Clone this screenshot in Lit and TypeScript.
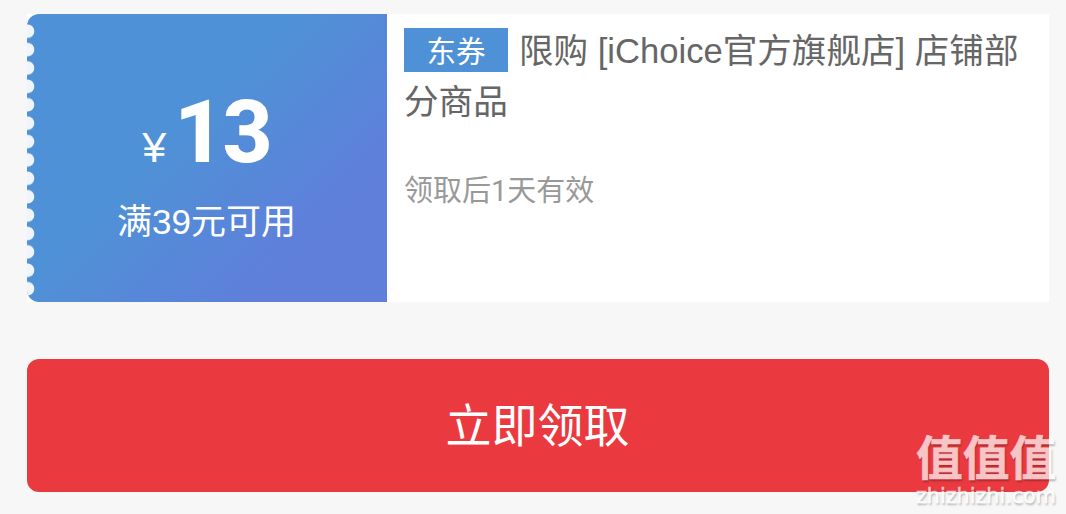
import { LitElement, html, css } from 'lit';
import { customElement, property } from 'lit/decorators.js';

const FONT = css`'Liberation Sans', 'Noto Sans CJK SC', sans-serif`;

@customElement('coupon-card')
export class CouponCard extends LitElement {
  static styles = css`
    :host {
      display: flex;
      height: 288px;
      background: #fff;
      font-family: ${FONT};
    }

    .value {
      position: relative;
      box-sizing: border-box;
      flex: 0 0 360px;
      padding-top: 74px;
      border-radius: 12px 0 0 12px;
      overflow: hidden;
      background: linear-gradient(135deg, #4f91d6 42%, #5f7fdb 78%);
      color: #fff;
      text-align: center;
    }

    /* Perforated left edge */
    .holes {
      position: absolute;
      left: 0;
      top: 7.5px;
      width: 8px;
      height: 276px;
      background: radial-gradient(circle at 0.5px 9.2px, #f0f5fd 6.3px, transparent 7.2px) 0 0 / 8px 18.4px repeat-y;
    }

    .amount {
      display: flex;
      justify-content: center;
      align-items: baseline;
      height: 88px;
      line-height: 88px;
      white-space: nowrap;
    }

    .symbol {
      font-size: 43px;
      margin-right: 8px;
    }

    .number {
      font-family: Roboto, ${FONT};
      font-size: 87px;
      font-weight: 800;
      letter-spacing: -2px;
      margin-right: 1px;
    }

    .limit {
      margin-top: 20px;
      font-size: 35px;
      line-height: 52px;
      padding-right: 1px;
    }

    .info {
      flex: 1;
      padding: 12px 17px 0;
    }

    .title {
      font-size: 34.6px;
      line-height: 51px;
      color: #666;
    }

    .tag {
      display: inline-block;
      width: 104px;
      height: 44px;
      margin: -4px 11px 4px 0;
      background: #4f91d6;
      color: #fff;
      font-size: 29.5px;
      line-height: 48px;
      text-align: center;
      vertical-align: middle;
    }

    .validity {
      margin-top: 41px;
      font-family: Roboto, 'Noto Sans CJK SC', sans-serif;
      font-size: 29px;
      line-height: 44px;
      color: #999;
    }
  `;

  @property({ type: Number }) amount = 0;
  @property({ type: String }) limit = '';
  @property({ type: String }) tag = '';
  @property({ type: String }) name = '';
  @property({ type: String }) validity = '';

  render() {
    return html`
      <div class="value">
        <div class="holes"></div>
        <div class="amount"><span class="symbol">¥</span><span class="number">${this.amount}</span></div>
        <div class="limit">${this.limit}</div>
      </div>
      <div class="info">
        <div class="title"><span class="tag">${this.tag}</span>${this.name}</div>
        <div class="validity">${this.validity}</div>
      </div>
    `;
  }
}

@customElement('app-root')
export class AppRoot extends LitElement {
  static styles = css`
    :host {
      display: block;
      position: relative;
      box-sizing: border-box;
      width: 1066px;
      height: 514px;
      padding: 14px 17px 0 27px;
      overflow: hidden;
      background: #f7f7f7;
      font-family: ${FONT};
    }

    .claim {
      display: block;
      width: 100%;
      height: 133px;
      margin-top: 57px;
      padding: 2px 1px 0 0;
      border: 0;
      border-radius: 12px;
      background: #ea3a3f;
      color: #fff;
      font: 46px/131px ${FONT};
    }

    /* Site mark laid over the bottom right corner */
    .watermark {
      position: absolute;
      right: 9px;
      bottom: 6px;
      width: 141px;
      color: #fff;
      opacity: 0.7;
      text-shadow: 1px 2px 2px rgba(0, 0, 0, 0.4);
      white-space: nowrap;
    }

    .mark {
      font: bold 46.7px/58px 'Noto Sans CJK SC', sans-serif;
      -webkit-text-stroke: 0.6px #fff;
    }

    .site {
      font: 20.7px/24px 'DejaVu Sans', sans-serif;
      -webkit-text-stroke: 0.5px #fff;
    }
  `;

  render() {
    return html`
      <coupon-card
        .amount=${13}
        limit="满39元可用"
        tag="东券"
        name="限购 [iChoice官方旗舰店] 店铺部分商品"
        validity="领取后1天有效"
      ></coupon-card>
      <button class="claim">立即领取</button>
      <div class="watermark">
        <div class="mark">值值值</div>
        <div class="site">zhizhizhi.com</div>
      </div>
    `;
  }
}

declare global {
  interface HTMLElementTagNameMap {
    'coupon-card': CouponCard;
    'app-root': AppRoot;
  }
}
